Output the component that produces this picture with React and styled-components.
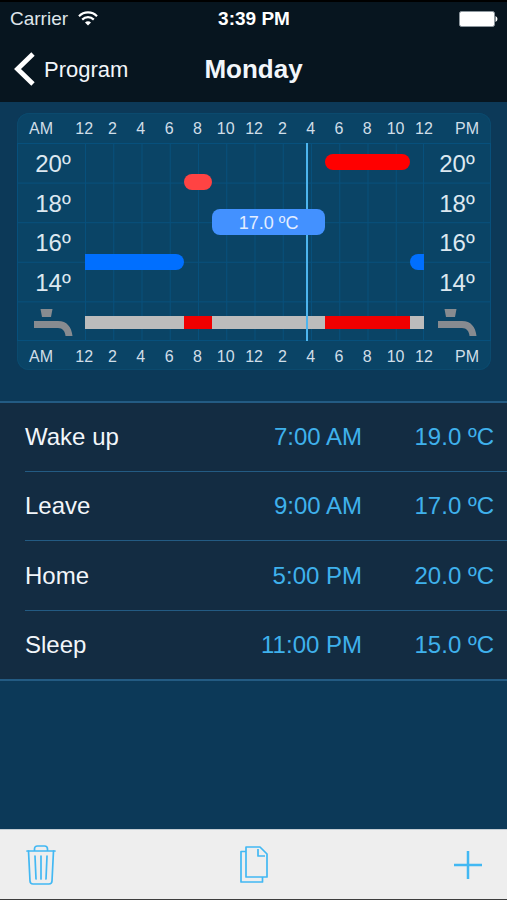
import React from "react";
import styled, { createGlobalStyle, css } from "styled-components";

const GlobalStyle = createGlobalStyle`
  *, *::before, *::after { box-sizing: border-box; }
  body {
    margin: 0;
    background: #0c3958;
    font-family: "Liberation Sans", Arial, Helvetica, sans-serif;
    color: #f2f6fa;
  }
  button { margin: 0; padding: 0; border: 0; background: none; font: inherit; color: inherit; cursor: pointer; }
  svg { display: block; }
`;

const Screen = styled.div`
  display: flex;
  flex-direction: column;
  min-height: 100vh;
  background: #0c3958;
`;

const Header = styled.header`
  height: 102px;
  background: #07151f;
  border-top: 2px solid #000;
`;

const StatusBar = styled.div`
  display: grid;
  grid-template-columns: 1fr auto 1fr;
  align-items: center;
  height: 33px;
  padding: 0 9px 0 10px;
  font-size: 19px;
`;

const Carrier = styled.div`
  display: flex;
  align-items: center;
  gap: 10px;
  color: #dfe5ea;
`;

const Clock = styled.time`
  font-weight: 700;
  color: #fff;
`;

const BatterySlot = styled.div`
  justify-self: end;
`;

const NavBar = styled.nav`
  display: grid;
  grid-template-columns: 1fr auto 1fr;
  align-items: center;
  height: 67px;
  padding: 0 14px;
`;

const BackButton = styled.button`
  display: flex;
  align-items: center;
  justify-self: start;
  gap: 9px;
  font-size: 22px;
`;

const BackLabel = styled.span`
  padding-top: 3px;
  line-height: 30px;
`;

const Title = styled.h1`
  margin: 0;
  font-size: 26px;
  font-weight: 700;
  line-height: 30px;
`;

const Main = styled.main`
  flex: 1;
`;

const ChartPanel = styled.section`
  margin: 11px 16px 31px 17px;
  border-radius: 12px;
  background: #0a4466;
  box-shadow: inset 0 0 0 1px #0b4a6e;
`;

const HourScale = styled.div`
  display: grid;
  grid-template-columns: 53px 1fr 53px;
  align-items: center;
  height: ${(p) => (p.$bottom ? "29px" : "30px")};
  padding-top: 2px;
  color: #d0dee8;
  font-size: 16px;
  line-height: 20px;
`;

const Period = styled.span`
  justify-self: ${(p) => (p.$end ? "end" : "start")};
  padding: 0 12px;
`;

const Hours = styled.div`
  display: flex;
`;

const Hour = styled.span`
  flex: 1 1 0;
  min-width: 0;
  text-align: center;
`;

const ChartBody = styled.div`
  display: grid;
  grid-template-columns: 67px 1fr 66px;
  height: 198px;
  border: solid #07507c;
  border-width: 0 1px;
  background: linear-gradient(#07507c, #07507c) bottom / 100% 1px no-repeat,
    linear-gradient(to bottom, #07507c 1px, transparent 1px) top / 100% 20% repeat-y;
`;

const DegreeColumn = styled.div`
  display: flex;
  flex-direction: column;
  padding-left: ${(p) => (p.$left ? "3px" : "0")};
`;

const Degree = styled.div`
  display: flex;
  flex: 1 1 0;
  align-items: center;
  justify-content: center;
  padding-top: 3px;
  color: #dde8f0;
  font-size: 24px;
  line-height: 28px;
`;

const Plot = styled.div`
  position: relative;
  display: grid;
  grid-template-columns: repeat(24, 1fr);
  grid-template-rows: repeat(9, 20px);
  align-items: center;
  padding: 9px 0;
  background: linear-gradient(#07507c, #07507c) right / 1px 100% no-repeat,
    linear-gradient(to right, #07507c 1px, transparent 1px) left / calc(100% / 12) 100% repeat-x;
`;

const barColors = {
  hot: "#ff0000",
  warm: "#ff4343",
  mild: "#4391ff",
  cool: "#006fff",
};

const Bar = styled.div`
  z-index: 1;
  grid-column: ${(p) => p.$from + 1} / ${(p) => p.$to + 1};
  grid-row: ${(p) => 21 - p.$temp};
  height: 16px;
  border-radius: ${(p) => (p.$from === 0 ? "0 8px 8px 0" : p.$to === 24 ? "8px 0 0 8px" : "8px")};
  background: ${(p) => barColors[p.$tone]};
  ${(p) =>
    p.$selected &&
    css`
      height: 26px;
      margin: -3px 0;
      color: #e4eeff;
      font-size: 18px;
      line-height: 28px;
      text-align: center;
      white-space: nowrap;
    `}
`;

const WaterBar = styled.div`
  grid-column: ${(p) => p.$from + 1} / ${(p) => p.$to + 1};
  grid-row: 9;
  height: 13px;
  background: ${(p) => (p.$on ? "#f00000" : "#bcbcbc")};
`;

const NowLine = styled.div`
  position: absolute;
  top: 0;
  bottom: 0;
  width: 2px;
  background: #4db5ee;
`;

const Schedule = styled.section`
  padding-left: 25px;
  border: solid #235b83;
  border-width: 2px 0;
  background: #132c42;
`;

const ScheduleTable = styled.table`
  width: 100%;
  height: 276px;
  border-collapse: collapse;
`;

const ScheduleRow = styled.tr`
  &:not(:last-child) {
    border-bottom: 1px solid #235b83;
  }
`;

const NameCell = styled.th`
  padding: 0;
  font-size: 24px;
  font-weight: 400;
  text-align: left;
`;

const ValueCell = styled.td`
  width: ${(p) => (p.$temp ? "145px" : "160px")};
  padding: 0 ${(p) => (p.$temp ? "13px" : "0")} 0 0;
  color: #3fb1ec;
  font-size: 24px;
  text-align: right;
  white-space: nowrap;
`;

const Toolbar = styled.footer`
  display: grid;
  grid-template-columns: 1fr auto 1fr;
  align-items: center;
  height: 71px;
  padding: 0 25px 0 26px;
  border: solid #c3ccd3;
  border-width: 1px 0;
  border-bottom-color: #3c3c3c;
  background: #eeeeee;
  color: #42b8f3;
`;

const ToolButton = styled.button`
  justify-self: ${(p) => p.$align};
`;

const HOURS = [12, 2, 4, 6, 8, 10, 12, 2, 4, 6, 8, 10, 12];
const DEGREES = [20, 18, 16, 14];

const BARS = [
  { from: 0, to: 7, temp: 15, tone: "cool" },
  { from: 7, to: 9, temp: 19, tone: "warm" },
  { from: 9, to: 17, temp: 17, tone: "mild", label: "17.0 ºC" },
  { from: 17, to: 23, temp: 20, tone: "hot" },
  { from: 23, to: 24, temp: 15, tone: "cool" },
];

const WATER = [
  { from: 0, to: 7 },
  { from: 7, to: 9, on: true },
  { from: 9, to: 17 },
  { from: 17, to: 23, on: true },
  { from: 23, to: 24 },
];

const EVENTS = [
  { name: "Wake up", time: "7:00 AM", temp: "19.0 ºC" },
  { name: "Leave", time: "9:00 AM", temp: "17.0 ºC" },
  { name: "Home", time: "5:00 PM", temp: "20.0 ºC" },
  { name: "Sleep", time: "11:00 PM", temp: "15.0 ºC" },
];

const NOW = 15 + 39 / 60;

const WifiIcon = () => (
  <svg width="20" height="15" viewBox="0 0 20 15" fill="none" stroke="#fff" strokeWidth="2.2" aria-hidden="true">
    <path d="M1 5.2C6 .1 14 .1 19 5.2" />
    <path d="M4.2 8.6c3.3-3.3 8.3-3.3 11.6 0" />
    <path d="M7 11.4c1.8-1.7 4.2-1.7 6 0L10 14.6z" fill="#fff" stroke="none" />
  </svg>
);

const BatteryIcon = () => (
  <svg width="39" height="16" viewBox="0 0 39 16" aria-hidden="true">
    <rect x=".5" y=".5" width="35" height="15" rx="2" fill="#fff" stroke="#8d979e" />
    <path d="M36.5 5v6q2-.8 2-3t-2-3z" fill="#fff" />
  </svg>
);

const ChevronIcon = () => (
  <svg width="21" height="34" viewBox="0 0 21 34" fill="none" stroke="#fff" strokeWidth="4.8" aria-hidden="true">
    <path d="M19 2 3.500 17 19 32" />
  </svg>
);

const TapIcon = () => (
  <svg width="39" height="28" viewBox="0 0 39 28" fill="#878b90" aria-hidden="true">
    <path d="M6.500 0h12L17 8H8zM0 12h24c9 0 13.500 6 14.500 15h-7c-.5-5-3-8-7.500-8H0z" />
  </svg>
);

const TrashIcon = () => (
  <svg width="30" height="40" viewBox="0 0 30 40" fill="none" stroke="currentColor" strokeWidth="1.7" strokeLinecap="round" strokeLinejoin="round" aria-hidden="true">
    <path d="M1 6h28M8.500 6V4q0-3 3-3h7q3 0 3 3v2" />
    <path d="M2.500 6 4 36q.2 3 3 3h16q2.800 0 3-3L27.500 6" />
    <path d="m9 11 1 23M15 11v23M21 11l-1 23" />
  </svg>
);

const PagesIcon = () => (
  <svg width="28" height="37" viewBox="0 0 28 37" fill="none" stroke="currentColor" strokeWidth="1.7" strokeLinejoin="round" aria-hidden="true">
    <path d="M6 1h14l7 7v23H6z" />
    <path d="M18 3v7h7" />
    <path d="M6 5.500H1V36h21.500v-5" />
  </svg>
);

const PlusIcon = () => (
  <svg width="28" height="28" viewBox="0 0 28 28" fill="none" stroke="currentColor" strokeWidth="2.500" aria-hidden="true">
    <path d="M14 0v28M0 14h28" />
  </svg>
);

const HourLabels = ({ bottom }) => (
  <HourScale $bottom={bottom}>
    <Period>AM</Period>
    <Hours>
      {HOURS.map((hour, i) => (
        <Hour key={i}>{hour}</Hour>
      ))}
    </Hours>
    <Period $end>PM</Period>
  </HourScale>
);

const DegreeLabels = ({ left }) => (
  <DegreeColumn $left={left}>
    {DEGREES.map((degree) => (
      <Degree key={degree}>{degree}º</Degree>
    ))}
    <Degree>
      <TapIcon />
    </Degree>
  </DegreeColumn>
);

export default function App() {
  return (
    <Screen>
      <GlobalStyle />
      <Header>
        <StatusBar>
          <Carrier>
            Carrier
            <WifiIcon />
          </Carrier>
          <Clock>3:39 PM</Clock>
          <BatterySlot>
            <BatteryIcon />
          </BatterySlot>
        </StatusBar>
        <NavBar>
          <BackButton type="button">
            <ChevronIcon />
            <BackLabel>Program</BackLabel>
          </BackButton>
          <Title>Monday</Title>
        </NavBar>
      </Header>
      <Main>
        <ChartPanel>
          <HourLabels />
          <ChartBody>
            <DegreeLabels left />
            <Plot>
              {WATER.map((w) => (
                <WaterBar key={w.from} $from={w.from} $to={w.to} $on={w.on} />
              ))}
              <NowLine style={{ left: `${(NOW / 24) * 100}%` }} />
              {BARS.map((b) => (
                <Bar key={b.from} $from={b.from} $to={b.to} $temp={b.temp} $tone={b.tone} $selected={Boolean(b.label)}>
                  {b.label}
                </Bar>
              ))}
            </Plot>
            <DegreeLabels />
          </ChartBody>
          <HourLabels bottom />
        </ChartPanel>
        <Schedule>
          <ScheduleTable>
            <tbody>
              {EVENTS.map((e) => (
                <ScheduleRow key={e.name}>
                  <NameCell scope="row">{e.name}</NameCell>
                  <ValueCell>{e.time}</ValueCell>
                  <ValueCell $temp>{e.temp}</ValueCell>
                </ScheduleRow>
              ))}
            </tbody>
          </ScheduleTable>
        </Schedule>
      </Main>
      <Toolbar>
        <ToolButton type="button" aria-label="Delete" $align="start">
          <TrashIcon />
        </ToolButton>
        <ToolButton type="button" aria-label="Copy" $align="center">
          <PagesIcon />
        </ToolButton>
        <ToolButton type="button" aria-label="Add" $align="end">
          <PlusIcon />
        </ToolButton>
      </Toolbar>
    </Screen>
  );
}
